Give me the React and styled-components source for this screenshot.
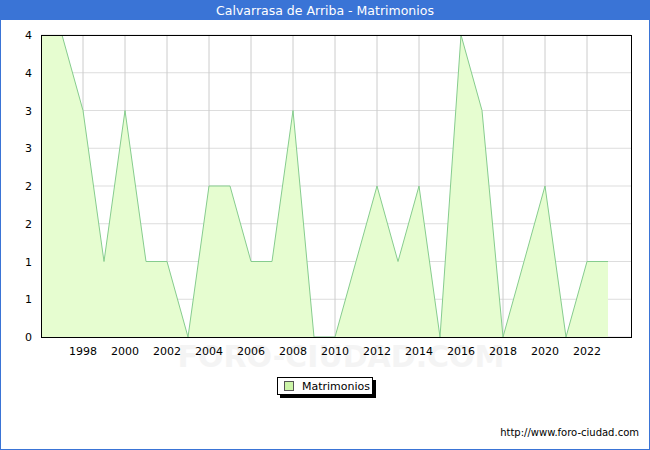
import React from "react";
import styled, { createGlobalStyle } from "styled-components";

const G = createGlobalStyle`
  html,body{margin:0;padding:0;background:#fff;}
  body{font-family:"DejaVu Sans",Verdana,sans-serif;}
`;
const Frame = styled.div`
  width:650px;height:450px;box-sizing:border-box;border:1px solid #3a74d6;border-top:none;
  display:flex;flex-direction:column;position:relative;
`;
const Title = styled.div`
  height:20px;background:#3a74d6;color:#fff;font-size:12.5px;display:flex;align-items:center;justify-content:center;
`;
const Chart = styled.svg`display:block;`;
const Legend = styled.div`
  position:absolute;left:276px;top:377px;width:96px;height:18px;border:1px solid #000;box-shadow:3px 3px 0 #000;
  background:#fff;display:flex;align-items:center;gap:8px;padding-left:6px;box-sizing:border-box;font-size:11px;
`;
const Swatch = styled.span`width:8px;height:8px;background:#ccf5a8;border:1px solid #555;`;
const Url = styled.div`position:absolute;right:10px;top:427px;font-size:10px;color:#000;`;

const vals=[4,4,3,1,3,1,1,0,2,2,1,1,3,0,0,1,2,1,2,0,4,3,0,1,2,0,1,1];
const X=i=>40+i*21, Y=v=>337-v*75.5;

export default function App(){
  const pts=vals.map((v,i)=>`${X(i)},${Y(v)}`).join(" ");
  const poly=`${X(0)},337 ${pts} ${X(vals.length-1)},337`;
  const ys=[0,1,1,2,2,3,3,4,4];
  return <Frame><G/>
    <Title>Calvarrasa de Arriba - Matrimonios</Title>
    <Chart width="648" height="429" viewBox="0 20 648 429">
      <text x="340" y="367" fontSize="30" textAnchor="middle" fill="#f4f4f4" fontWeight="bold">FORO-CIUDAD.COM</text>
      {ys.map((l,i)=>{const y=337-i*37.75;return <line key={i} x1="40" x2="630" y1={y} y2={y} stroke="#ddd"/>})}
      {Array.from({length:13},(_,k)=>{const x=X(2+2*k);return <line key={k} x1={x} x2={x} y1="35" y2="337" stroke="#ccc"/>})}
      <polygon points={poly} fill="#e6fdd0"/>
      <polyline points={vals.map((v,i)=>`${X(i)},${Y(v)}`).slice(1).join(" ")} fill="none" stroke="#86cc8e" strokeWidth="1"/>
      <rect x="40.5" y="35.5" width="590" height="302" fill="none" stroke="#000"/>
      {ys.map((l,i)=>{const y=337-i*37.75;return <text key={i} x="31" y={y+4} fontSize="11" textAnchor="end" fill="#000">{l}</text>})}
      {Array.from({length:13},(_,k)=><text key={k} x={X(2+2*k)} y="355" fontSize="11" textAnchor="middle">{1998+2*k}</text>)}
    </Chart>
    <Legend><Swatch/>Matrimonios</Legend>
    <Url>http://www.foro-ciudad.com</Url>
  </Frame>;
}
